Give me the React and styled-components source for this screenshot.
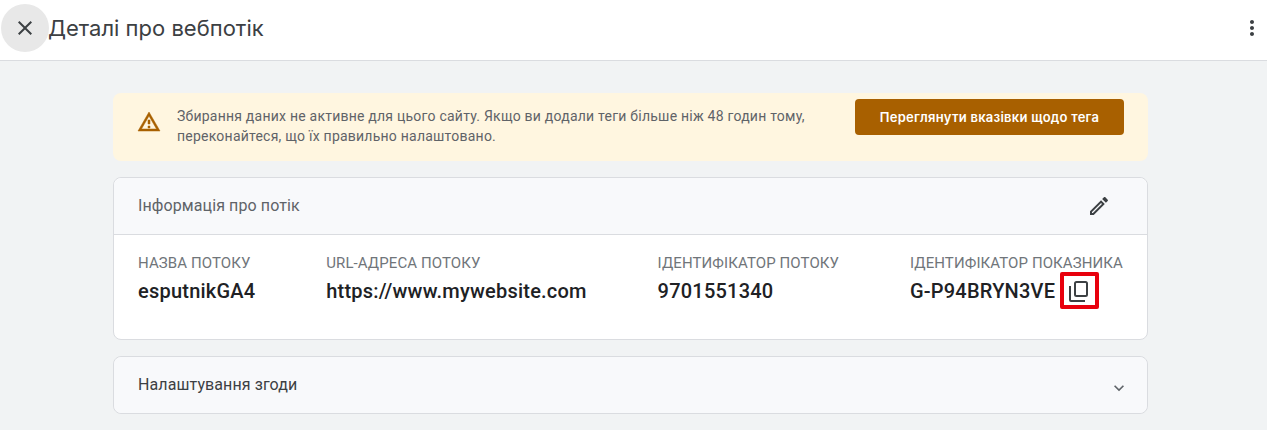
import React from 'react'
import styled, { createGlobalStyle } from 'styled-components'

const GlobalStyle = createGlobalStyle`
  html, body {
    margin: 0;
    background: #f1f3f4;
    font-family: Roboto, "Liberation Sans", sans-serif;
    color: #202124;
  }
`

const Page = styled.div`
  width: 1267px;
  height: 430px;
  overflow: hidden;
`

const TopBar = styled.header`
  display: flex;
  align-items: center;
  height: 61px;
  padding: 0 3px 0 1px;
  box-sizing: border-box;
  background: #fff;
  border-bottom: 1px solid #dadce0;
`

const CloseButton = styled.div`
  display: flex;
  align-items: center;
  justify-content: center;
  flex: none;
  width: 48px;
  height: 48px;
  margin-top: -4px;
  border-radius: 50%;
  background: #e8e8e8;
  color: #3c4043;
`

const Title = styled.h1`
  flex: 1;
  margin: -4px 0 0 -1px;
  font-family: Inter, Roboto, sans-serif;
  font-size: 22px;
  font-weight: 400;
  color: #3c4043;
`

const MoreButton = styled.div`
  display: flex;
  align-items: center;
  justify-content: center;
  width: 24px;
  height: 24px;
  margin-top: -4px;
  color: #3c4043;
`

const Content = styled.main`
  display: flex;
  flex-direction: column;
  gap: 16px;
  width: 1035px;
  margin: 32px 0 0 113px;
`

const Banner = styled.section`
  display: flex;
  align-items: flex-start;
  height: 68px;
  box-sizing: border-box;
  padding: 6px 24px 0;
  background: #fff6e0;
  border-radius: 8px;
`

const WarningIcon = styled.svg`
  flex: none;
  width: 24px;
  height: 24px;
  margin: 11px 15px 0 0;
  color: #a86000;
`

const BannerText = styled.p`
  flex: 1;
  margin: 7px 0 0 1px;
  font-size: 14px;
  line-height: 20px;
  letter-spacing: 0.23px;
  color: #5f6368;
`

const BannerButton = styled.button`
  width: 269px;
  height: 36px;
  border: 0;
  border-radius: 4px;
  background: #a86000;
  color: #fff;
  font-family: Inter, Roboto, sans-serif;
  font-size: 13px;
  font-weight: 600;
  letter-spacing: 0.25px;
`

const Card = styled.section`
  border: 1px solid #dadce0;
  border-radius: 8px;
  background: ${props => (props.$plain ? '#f8f9fb' : '#fff')};
`

const CardHead = styled.div`
  display: flex;
  align-items: center;
  justify-content: space-between;
  height: 54px;
  padding: 0 24px 2px;
  border-radius: ${props => (props.$last ? '8px' : '8px 8px 0 0')};
  background: #f8f9fb;
  border-bottom: ${props => (props.$last ? '0' : '1px solid #dadce0')};
  font-size: 16px;
  letter-spacing: 0.1px;
`

const CardTitle = styled.span`
  color: ${props => (props.$dark ? '#3c4043' : '#5f6368')};
`

const EditIcon = styled.svg`
  width: 24px;
  height: 24px;
  margin: 2px 12px 0 0;
  color: #3c4043;
`

const ChevronIcon = styled.svg`
  width: 20px;
  height: 20px;
  margin: 8px -6px 0 0;
  color: #5f6368;
`

const Fields = styled.div`
  display: flex;
  justify-content: space-between;
  height: 104px;
  padding: 18px 24px 0;
  box-sizing: border-box;
`

const Field = styled.div`
  display: flex;
  flex-direction: column;
  gap: 6px;
`

const Label = styled.div`
  font-size: 15px;
  line-height: 20px;
  letter-spacing: 0.1px;
  color: #70757a;
`

const ValueRow = styled.div`
  display: flex;
  align-items: center;
  gap: 12px;
  height: 24px;
`

const Value = styled.div`
  font-size: 20px;
  line-height: 24px;
  font-weight: 500;
  letter-spacing: 0.22px;
  color: #202124;
`

const CopyButton = styled.div`
  position: relative;
  flex: none;
  width: 24px;
  height: 24px;
  margin-top: 2px;
  color: #3c4043;
`

const Highlight = styled.div`
  position: absolute;
  left: -7px;
  top: -8px;
  width: 39px;
  height: 37px;
  box-sizing: border-box;
  border: 4px solid #e8000d;
  border-radius: 2px;
`

const fields = [
  { label: 'НАЗВА ПОТОКУ', value: 'esputnikGA4' },
  { label: 'URL-АДРЕСА ПОТОКУ', value: 'https://www.mywebsite.com' },
  { label: 'ІДЕНТИФІКАТОР ПОТОКУ', value: '9701551340' },
  { label: 'ІДЕНТИФІКАТОР ПОКАЗНИКА', value: 'G-P94BRYN3VE', copy: true },
]

const App = () => {
  return (
    <Page>
      <GlobalStyle />
      <TopBar>
        <CloseButton>
          <svg width="24" height="24" viewBox="0 0 24 24" fill="currentColor">
            <path d="M19 6.41 17.59 5 12 10.59 6.41 5 5 6.41 10.59 12 5 17.59 6.41 19 12 13.41 17.59 19 19 17.59 13.41 12z" />
          </svg>
        </CloseButton>
        <Title>Деталі про вебпотік</Title>
        <MoreButton>
          <svg width="24" height="24" viewBox="0 0 24 24" fill="currentColor">
            <path d="M12 8c1.1 0 2-.9 2-2s-.9-2-2-2-2 .9-2 2 .9 2 2 2zm0 2c-1.1 0-2 .9-2 2s.9 2 2 2 2-.9 2-2-.9-2-2-2zm0 6c-1.1 0-2 .9-2 2s.9 2 2 2 2-.9 2-2-.9-2-2-2z" />
          </svg>
        </MoreButton>
      </TopBar>
      <Content>
        <Banner>
          <WarningIcon viewBox="0 0 24 24" fill="currentColor" stroke="currentColor" strokeWidth="0.5">
            <path d="M12 5.99 19.53 19H4.47L12 5.99M12 2 1 21h22L12 2zm1 14h-2v2h2v-2zm0-6h-2v4h2v-4z" />
          </WarningIcon>
          <BannerText>
            Збирання даних не активне для цього сайту. Якщо ви додали теги більше ніж 48 годин тому,
            <br />
            переконайтеся, що їх правильно налаштовано.
          </BannerText>
          <BannerButton>Переглянути вказівки щодо тега</BannerButton>
        </Banner>
        <Card>
          <CardHead>
            <CardTitle>Інформація про потік</CardTitle>
            <EditIcon viewBox="0 0 24 24" fill="currentColor">
              <path d="M14.06 9.02l.92.92L5.92 19H5v-.92l9.06-9.06M17.66 3c-.25 0-.51.1-.7.29l-1.83 1.83 3.75 3.75 1.83-1.83c.39-.39.39-1.02 0-1.41l-2.34-2.34c-.2-.2-.45-.29-.71-.29zm-3.6 3.19L3 17.25V21h3.75L17.81 9.94l-3.75-3.75z" />
            </EditIcon>
          </CardHead>
          <Fields>
            {fields.map(field => (
              <Field key={field.label}>
                <Label>{field.label}</Label>
                <ValueRow>
                  <Value>{field.value}</Value>
                  {field.copy && (
                    <CopyButton>
                      <svg width="24" height="24" viewBox="0 0 24 24" fill="none" stroke="currentColor" strokeWidth="2">
                        <rect x="8" y="2" width="12" height="14" rx="1.5" />
                        <path d="M3 6v14a1 1 0 0 0 1 1h14" />
                      </svg>
                      <Highlight />
                    </CopyButton>
                  )}
                </ValueRow>
              </Field>
            ))}
          </Fields>
        </Card>
        <Card $plain>
          <CardHead $last>
            <CardTitle $dark>Налаштування згоди</CardTitle>
            <ChevronIcon viewBox="0 0 24 24" fill="currentColor">
              <path d="M16.59 8.59 12 13.17 7.41 8.59 6 10l6 6 6-6z" />
            </ChevronIcon>
          </CardHead>
        </Card>
      </Content>
    </Page>
  )
}

export default App
